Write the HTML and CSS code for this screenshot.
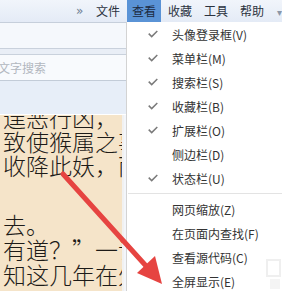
FILE: index.html
```html
<!DOCTYPE html>
<html lang="zh-CN">
<head>
<meta charset="utf-8">
<link rel="stylesheet" href="styles.css">
</head>
<body>
<div class="screen">
  <div class="toolbar">
    <span class="chev">»</span>
    <span class="mitem">文件</span>
    <span class="mitem active">查看</span>
    <span class="mitem">收藏</span>
    <span class="mitem">工具</span>
    <span class="mitem">帮助</span>
    <span class="drop">▾</span>
  </div>
  <div class="main">
    <div class="side">
      <div class="band1"></div>
      <div class="band2"></div>
      <div class="search">文字搜索</div>
      <div class="band3"></div>
      <div class="book">
        <p class="line first">逞恶行凶，了</p>
        <p class="line">致使猴属之事</p>
        <p class="line">收降此妖，而</p>
        <p class="line wide gap">去。</p>
        <p class="line wide">有道？”一语</p>
        <p class="line wide">知这几年在外</p>
      </div>
    </div>
    <div class="rest"></div>
  </div>

  <div class="menu">
    <div class="row"><span class="chk"><svg viewBox="0 0 10 8" width="10" height="8"><path d="M0.7 3.6 L3.7 6.6 L9.3 1" /></svg></span><span class="lbl">头像登录框(V)</span></div>
    <div class="row"><span class="chk"><svg viewBox="0 0 10 8" width="10" height="8"><path d="M0.7 3.6 L3.7 6.6 L9.3 1" /></svg></span><span class="lbl">菜单栏(M)</span></div>
    <div class="row"><span class="chk"><svg viewBox="0 0 10 8" width="10" height="8"><path d="M0.7 3.6 L3.7 6.6 L9.3 1" /></svg></span><span class="lbl">搜索栏(S)</span></div>
    <div class="row"><span class="chk"><svg viewBox="0 0 10 8" width="10" height="8"><path d="M0.7 3.6 L3.7 6.6 L9.3 1" /></svg></span><span class="lbl">收藏栏(B)</span></div>
    <div class="row"><span class="chk"><svg viewBox="0 0 10 8" width="10" height="8"><path d="M0.7 3.6 L3.7 6.6 L9.3 1" /></svg></span><span class="lbl">扩展栏(O)</span></div>
    <div class="row"><span class="chk"></span><span class="lbl">侧边栏(D)</span></div>
    <div class="row"><span class="chk"><svg viewBox="0 0 10 8" width="10" height="8"><path d="M0.7 3.6 L3.7 6.6 L9.3 1" /></svg></span><span class="lbl">状态栏(U)</span></div>
    <div class="sep"></div>
    <div class="row"><span class="chk"></span><span class="lbl">网页缩放(Z)</span></div>
    <div class="row"><span class="chk"></span><span class="lbl">在页面内查找(F)</span></div>
    <div class="row"><span class="chk"></span><span class="lbl">查看源代码(C)</span></div>
    <div class="row"><span class="chk"></span><span class="lbl">全屏显示(E)</span></div>
  </div>

  <svg class="wm" viewBox="0 0 16 32" width="16" height="32"><rect x="1" y="1" width="13" height="16" fill="none" stroke="#efefef" stroke-width="2"/><rect x="4" y="20" width="10" height="10" fill="#f4f4f4"/></svg>

  <svg class="arrow" viewBox="0 0 282 291" width="282" height="291">
    <line x1="63" y1="174" x2="147" y2="267" stroke="#e64441" stroke-width="5" stroke-linecap="round"/>
    <polygon points="162,284 137,273 155,256" fill="#e64441"/>
  </svg>
</div>
</body>
</html>
```
FILE: styles.css
```css
html, body {
  margin: 0;
  padding: 0;
  background: #ffffff;
}
.screen {
  position: relative;
  width: 282px;
  height: 291px;
  overflow: hidden;
  font-family: "Noto Sans CJK SC", "Liberation Sans", sans-serif;
}
.toolbar {
  height: 22px;
  border-bottom: 1px solid #c6cfdb;
  background: linear-gradient(#f1f5fb, #e4ebf6);
  display: flex;
  align-items: stretch;
  padding-left: 76px;
  gap: 2px;
  font-size: 12px;
  color: #2b3340;
}
.chev {
  width: 13px;
  display: flex;
  align-items: center;
  color: #6d7c93;
  font-family: "DejaVu Sans", sans-serif;
  font-size: 12px;
}
.mitem {
  padding: 0 5px;
  display: flex;
  align-items: center;
  line-height: 22px;
}
.mitem.active {
  background: #5a93d6;
  color: #1c2a40;
}
.drop {
  display: flex;
  align-items: center;
  padding-left: 6px;
  color: #8a97a8;
  font-size: 10px;
}
.main {
  display: flex;
  height: 268px;
}
.side {
  width: 126px;
  display: flex;
  flex-direction: column;
  background: #f3f6fb;
}
.band1 {
  height: 25px;
  background: #f5f8fc;
  border-bottom: 1px solid #c9d1dc;
}
.band2 {
  height: 5px;
  background: #e9eef6;
  border-bottom: 1px solid #c9d1dc;
}
.search {
  height: 25px;
  background: #f8fafd;
  border-bottom: 1px solid #c3ccd8;
  font-size: 12px;
  line-height: 25px;
  color: #b2b7bf;
  text-indent: -2px;
}
.band3 {
  height: 33px;
  background: #e7eef8;
  border-bottom: 1px solid #ffffff;
}
.book {
  flex: 1;
  width: 124px;
  border-right: 2px solid #f1f1f1;
  background: #f5e4c9;
  overflow: hidden;
  padding-left: 3px;
  box-sizing: border-box;
}
.line {
  margin: 0;
  white-space: nowrap;
  font-size: 23px;
  line-height: 24px;
  height: 24px;
  color: #1d1b18;
  font-weight: 300;
}
.line.first {
  margin-top: -10px;
}
.line.wide {
  height: 25px;
  line-height: 25px;
}
.line.gap {
  margin-top: 35px;
}
.rest {
  flex: 1;
  background: #ffffff;
}
.menu {
  position: absolute;
  left: 126px;
  top: 22px;
  width: 170px;
  background: #ffffff;
  border-left: 1px solid #d3d3d3;
  font-size: 12px;
  color: #333333;
}
.row {
  height: 24px;
  display: flex;
  align-items: center;
}
.chk {
  width: 45px;
  display: flex;
  align-items: center;
  padding-left: 21px;
  box-sizing: border-box;
}
.chk svg path {
  fill: none;
  stroke: #7a7a7a;
  stroke-width: 1.5;
}
.lbl {
  white-space: nowrap;
}
.sep {
  height: 1px;
  background: #e3e3e3;
  margin: 3px 0 3px 1px;
}
.wm {
  position: absolute;
  right: 0;
  bottom: 0;
}
.arrow {
  position: absolute;
  left: 0;
  top: 0;
}
```
